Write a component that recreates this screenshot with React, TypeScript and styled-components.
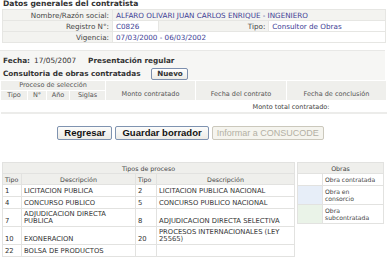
import styled, { createGlobalStyle } from "styled-components";

const GlobalStyle = createGlobalStyle`
  html, body {
    margin: 0;
    padding: 0;
    background: #ffffff;
  }
  body {
    font-family: "DejaVu Sans", Verdana, sans-serif;
    color: #333333;
  }
`;

interface IProceso {
  tipo: string;
  descripcion: string;
}

const procesos: Array<[IProceso, IProceso | null]> = [
  [{ tipo: "1", descripcion: "LICITACION PUBLICA" }, { tipo: "2", descripcion: "LICITACION PUBLICA NACIONAL" }],
  [{ tipo: "4", descripcion: "CONCURSO PUBLICO" }, { tipo: "5", descripcion: "CONCURSO PUBLICO NACIONAL" }],
  [{ tipo: "7", descripcion: "ADJUDICACION DIRECTA PUBLICA" }, { tipo: "8", descripcion: "ADJUDICACION DIRECTA SELECTIVA" }],
  [{ tipo: "10", descripcion: "EXONERACION" }, { tipo: "20", descripcion: "PROCESOS INTERNACIONALES (LEY 25565)" }],
  [{ tipo: "22", descripcion: "BOLSA DE PRODUCTOS" }, null],
];

const obras = [
  { color: "#ffffff", label: "Obra contratada" },
  { color: "#e7eef8", label: "Obra en consorcio" },
  { color: "#eaf3e8", label: "Obra subcontratada" },
];

const App: React.FC = () => {
  return (
    <Root>
      <GlobalStyle />
      <Title>Datos generales del contratista</Title>
      <InfoTable>
        <tbody>
          <tr>
            <Label $shaded>Nombre/Razón social:</Label>
            <Value $shaded colSpan={3}>ALFARO OLIVARI JUAN CARLOS ENRIQUE - INGENIERO</Value>
          </tr>
          <tr>
            <Label>Registro N°:</Label>
            <Value>C0826</Value>
            <Label>Tipo:</Label>
            <Value>Consultor de Obras</Value>
          </tr>
          <tr>
            <Label>Vigencia:</Label>
            <Value colSpan={3}>07/03/2000 - 06/03/2002</Value>
          </tr>
        </tbody>
      </InfoTable>

      <Band>
        <Row>
          <Strong>Fecha:</Strong>
          <Plain>17/05/2007</Plain>
          <Presentacion>Presentación regular</Presentacion>
        </Row>
        <Row>
          <Strong>Consultoria de obras contratadas</Strong>
          <SmallButton>Nuevo</SmallButton>
        </Row>
      </Band>

      <ObrasTable>
        <colgroup>
          <col style={{ width: 27 }} />
          <col style={{ width: 19 }} />
          <col style={{ width: 23 }} />
          <col style={{ width: 36 }} />
          <col style={{ width: 90 }} />
          <col style={{ width: 91 }} />
          <col />
        </colgroup>
        <thead>
          <tr>
            <Th colSpan={4}>Proceso de selección</Th>
            <Th rowSpan={2} $bottom>Monto contratado</Th>
            <Th rowSpan={2} $bottom>Fecha del contrato</Th>
            <Th rowSpan={2} $bottom>Fecha de conclusión</Th>
          </tr>
          <tr>
            <Th>Tipo</Th>
            <Th>N°</Th>
            <Th>Año</Th>
            <Th>Siglas</Th>
          </tr>
        </thead>
        <tbody>
          <tr>
            <TotalCell colSpan={5} />
            <TotalCell colSpan={2}>Monto total contratado:</TotalCell>
          </tr>
        </tbody>
      </ObrasTable>

      <Actions>
        <ActionButton>Regresar</ActionButton>
        <ActionButton>Guardar borrador</ActionButton>
        <ActionButton disabled>Informar a CONSUCODE</ActionButton>
      </Actions>

      <Legends>
        <TiposTable>
          <colgroup>
            <col style={{ width: 19 }} />
            <col style={{ width: 114 }} />
            <col style={{ width: 21 }} />
            <col />
          </colgroup>
          <thead>
            <tr>
              <LegendTh colSpan={4}>Tipos de proceso</LegendTh>
            </tr>
            <tr>
              <LegendTh $left>Tipo</LegendTh>
              <LegendTh>Descripción</LegendTh>
              <LegendTh $left>Tipo</LegendTh>
              <LegendTh>Descripción</LegendTh>
            </tr>
          </thead>
          <tbody>
            {procesos.map(([a, b]) => (
              <tr key={a.tipo}>
                <Td>{a.tipo}</Td>
                <Td>{a.descripcion}</Td>
                <Td>{b?.tipo}</Td>
                <Td>{b?.descripcion}</Td>
              </tr>
            ))}
          </tbody>
        </TiposTable>

        <ObrasLegend>
          <colgroup>
            <col style={{ width: 25 }} />
            <col />
          </colgroup>
          <thead>
            <tr>
              <LegendTh colSpan={2}>Obras</LegendTh>
            </tr>
          </thead>
          <tbody>
            {obras.map((o) => (
              <tr key={o.label}>
                <Swatch $color={o.color} />
                <LegendText>{o.label}</LegendText>
              </tr>
            ))}
          </tbody>
        </ObrasLegend>
      </Legends>
    </Root>
  );
};

const Root = styled.div`
  width: 387px;
  height: 258px;
  overflow: hidden;
  padding-left: 2px;
  box-sizing: border-box;
`;

const Title = styled.div`
  font-weight: 700;
  font-size: 7.6px;
  line-height: 8px;
  padding-left: 1px;
  color: #333333;
`;

const InfoTable = styled.table`
  width: 384px;
  border-collapse: collapse;
  margin-top: 1px;
  font-size: 7.2px;

  td {
    height: 10px;
    padding: 0 3px;
    border: 1px solid #e6e6e3;
    line-height: 9px;
  }
`;

interface ICell {
  $shaded?: boolean;
}

const Label = styled.td<ICell>`
  text-align: right;
  color: #444444;
  background: #f3f3f0;
  width: 103px;
  white-space: nowrap;
`;

const Value = styled.td<ICell>`
  color: #3d3d95;
  background: ${(p) => (p.$shaded ? "#f3f3f0" : "#ffffff")};
  white-space: nowrap;
`;

const Band = styled.div`
  margin-top: 7px;
  width: 385px;
  margin-left: -2px;
  padding-left: 3px;
  box-sizing: border-box;
  background: #f6f6f4;
  border-top: 1px solid #e8e8e6;
  padding-top: 3px;
  height: 30px;
  display: flex;
  flex-direction: column;
  gap: 1px;
`;

const Row = styled.div`
  display: flex;
  align-items: center;
  height: 13px;
  font-size: 7.3px;
`;

const Strong = styled.span`
  font-weight: 700;
  color: #333333;
`;

const Plain = styled.span`
  margin-left: 4px;
  color: #333333;
`;

const Presentacion = styled.span`
  font-weight: 700;
  margin-left: 12px;
  color: #333333;
`;

const SmallButton = styled.button`
  margin-left: 11px;
  height: 12px;
  width: 37px;
  padding: 0;
  font-family: "DejaVu Sans", Verdana, sans-serif;
  font-weight: 700;
  font-size: 7.2px;
  line-height: 10px;
  color: #333333;
  background: linear-gradient(#ffffff, #ecebe6);
  border: 1px solid #7d8fae;
  border-radius: 2px;
`;

const ObrasTable = styled.table`
  width: 387px;
  margin-left: -2px;
  border-collapse: collapse;
  table-layout: fixed;
  font-size: 6.5px;
  border-bottom: 2px solid #ececea;
`;

interface ITh {
  $bottom?: boolean;
  $left?: boolean;
}

const Th = styled.th<ITh>`
  font-weight: 400;
  color: #555555;
  background: #efefec;
  border: 1px solid #ffffff;
  height: 9px;
  padding: 0;
  line-height: 9px;
  vertical-align: ${(p) => (p.$bottom ? "bottom" : "middle")};
  padding-bottom: ${(p) => (p.$bottom ? "1px" : "0")};
  white-space: nowrap;
`;

const TotalCell = styled.td`
  height: 11px;
  padding: 0;
  text-align: center;
  color: #444444;
  font-size: 6.5px;
  background: #ffffff;
`;

const Actions = styled.div`
  display: flex;
  justify-content: center;
  gap: 3px;
  margin-top: 12px;
  padding-right: 8px;
`;

const ActionButton = styled.button`
  height: 14px;
  padding: 0 6px;
  font-family: "Liberation Sans", Arial, sans-serif;
  font-weight: 700;
  font-size: 9.5px;
  line-height: 12px;
  color: #111111;
  background: linear-gradient(#fcfcfb, #ecebe6);
  border: 1px solid #7f93b0;
  border-radius: 2px;

  &:disabled {
    font-weight: 400;
    font-size: 9px;
    color: #b3b0a4;
    border-color: #cbc8bc;
    background: #f5f4ee;
    padding: 0 4px;
  }
`;

const Legends = styled.div`
  display: flex;
  align-items: flex-start;
  gap: 2px;
  margin-top: 22px;
`;

const TiposTable = styled.table`
  width: 293px;
  border-collapse: collapse;
  table-layout: fixed;
  font-size: 6.8px;
  border: 1px solid #e2e2e0;
`;

const LegendTh = styled.th<ITh>`
  font-weight: 400;
  font-size: 6.3px;
  color: #444444;
  background: #efefec;
  border: 1px solid #e2e2e0;
  height: 10px;
  padding: 0 2px;
  line-height: 9px;
  text-align: ${(p) => (p.$left ? "left" : "center")};
`;

const Td = styled.td`
  border: 1px solid #e2e2e0;
  padding: 2px 2px 1px;
  height: 8px;
  line-height: 7px;
  vertical-align: bottom;
  color: #333333;
`;

const ObrasLegend = styled.table`
  width: 87px;
  border-collapse: collapse;
  table-layout: fixed;
  border: 1px solid #e2e2e0;
`;

interface ISwatch {
  $color: string;
}

const Swatch = styled.td<ISwatch>`
  background: ${(p) => p.$color};
  border: 1px solid #e2e2e0;
  padding: 0;
`;

const LegendText = styled.td`
  border: 1px solid #e2e2e0;
  font-size: 6.1px;
  line-height: 7px;
  padding: 2px 7px 2px 2px;
  height: 7px;
  color: #444444;
  vertical-align: top;
`;

export default App;
